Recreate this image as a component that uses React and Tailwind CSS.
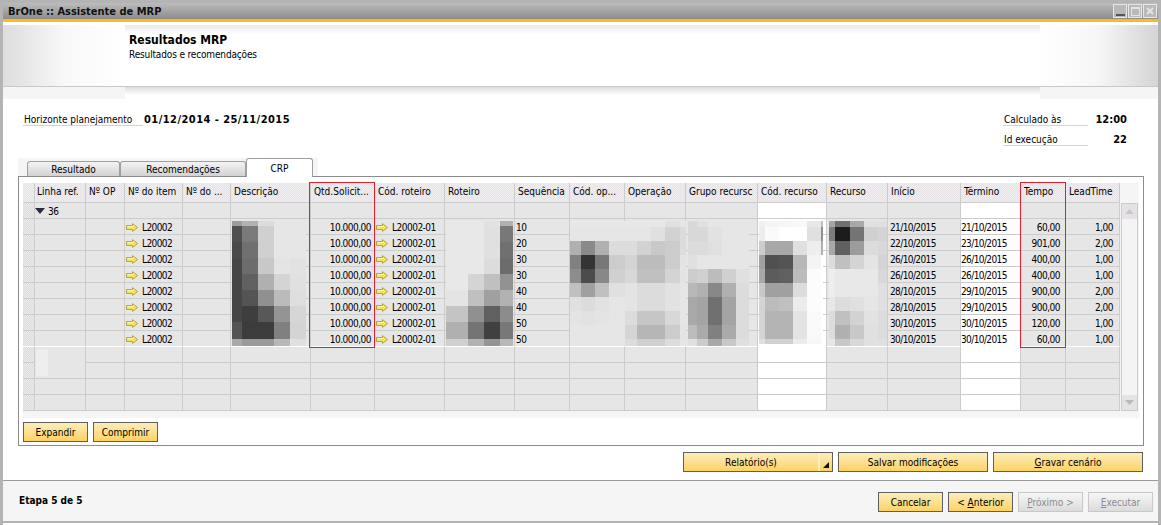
import React from "react";

const COLS = [12, 51, 39, 58, 48, 80, 64, 70, 70, 55, 55, 61, 72, 69, 61, 73, 60, 45, 54];
const GRID_COLS = "grid grid-cols-[12px_51px_39px_58px_48px_80px_64px_70px_70px_55px_55px_61px_72px_69px_61px_73px_60px_45px_54px]";
const HEADERS = [
  "", "Linha ref.", "Nº OP", "Nº do item", "Nº do ...", "Descrição", "Qtd.Solicit...", "Cód. roteiro",
  "Roteiro", "Sequência", "Cód. op...", "Operação", "Grupo recursc", "Cód. recurso", "Recurso",
  "Início", "Término", "Tempo", "LeadTime",
];
const ROWS = [
  ["10", "21/10/2015", "21/10/2015", "60,00", "1,00"],
  ["20", "22/10/2015", "23/10/2015", "901,00", "2,00"],
  ["30", "26/10/2015", "26/10/2015", "400,00", "1,00"],
  ["30", "26/10/2015", "26/10/2015", "400,00", "1,00"],
  ["40", "28/10/2015", "29/10/2015", "900,00", "2,00"],
  ["40", "28/10/2015", "29/10/2015", "900,00", "2,00"],
  ["50", "30/10/2015", "30/10/2015", "120,00", "1,00"],
  ["50", "30/10/2015", "30/10/2015", "60,00", "1,00"],
];
const WHITE_COLS = [13, 16];

const Y_FULL = [221, 226, 242, 258, 274, 290, 306, 322, 339, 346];
const Y_14 = [221, 227, 241, 255, 269, 283, 297, 311, 325, 339, 346];

// blurred blocks in the picture, page coordinates, one gray per block
const MOSAICS = [
  {
    xs: [232, 242, 258, 274, 290, 306],
    ys: Y_FULL,
    grays: [
      [0x9e, 0xb2, 0xdc, 0xe6, 0xe6],
      [0x50, 0x7a, 0xd0, 0xe6, 0xe6],
      [0x4a, 0x70, 0xd0, 0xe6, 0xe6],
      [0x46, 0x6c, 0xc8, 0xe4, 0xe2],
      [0x46, 0x60, 0xb0, 0xd4, 0xe0],
      [0x46, 0x54, 0x90, 0xbb, 0xde],
      [0x46, 0x3e, 0x58, 0x94, 0xd6],
      [0x54, 0x3c, 0x3c, 0x80, 0xd4],
      [0xa8, 0x9a, 0x9a, 0xb8, 0xe0],
    ],
  },
  {
    xs: [446, 468, 484, 500, 513],
    ys: Y_FULL,
    grays: [
      [0xe8, 0xe8, 0xe2, 0xb0],
      [0xe8, 0xe8, 0xe0, 0x78],
      [0xe8, 0xe8, 0xe0, 0x70],
      [0xe8, 0xe8, 0xdc, 0x6c],
      [0xe8, 0xd4, 0xc0, 0x92],
      [0xe4, 0xc0, 0xa0, 0xb2],
      [0xc4, 0x90, 0x60, 0x8c],
      [0xb0, 0x74, 0x40, 0x78],
      [0xd0, 0xb2, 0x94, 0xb8],
    ],
  },
  {
    xs: [570, 581, 595, 609, 625],
    ys: Y_14,
    grays: [
      [0xe8, 0xe8, 0xe8, 0xe8],
      [0xe6, 0xe6, 0xe6, 0xe6],
      [0xb0, 0x8a, 0xb0, 0xdc],
      [0x80, 0x34, 0x78, 0xcc],
      [0x8c, 0x4c, 0x88, 0xd0],
      [0xc0, 0xa0, 0xc0, 0xe0],
      [0xe0, 0xdc, 0xe2, 0xe6],
      [0xe4, 0xe2, 0xe4, 0xe6],
      [0xe6, 0xe6, 0xe6, 0xe6],
      [0xe6, 0xe6, 0xe6, 0xe6],
    ],
  },
  {
    xs: [625, 637, 651, 665, 680, 686],
    ys: Y_14,
    grays: [
      [0xe8, 0xe8, 0xe8, 0xe0, 0xe6],
      [0xe6, 0xe6, 0xe0, 0xd2, 0xdc],
      [0xdc, 0xd2, 0xc8, 0xcc, 0xdc],
      [0xd4, 0xbc, 0xbc, 0xcc, 0xe4],
      [0xd8, 0xc0, 0xc0, 0xd4, 0xe4],
      [0xe4, 0xdc, 0xdc, 0xe2, 0xe6],
      [0xe4, 0xdc, 0xdc, 0xe2, 0xe6],
      [0xdc, 0xc6, 0xc6, 0xd8, 0xe6],
      [0xd4, 0xb6, 0xb6, 0xcc, 0xe4],
      [0xdc, 0xd0, 0xd0, 0xdc, 0xe6],
    ],
  },
  {
    xs: [688, 697, 708, 722, 736, 749],
    ys: Y_14,
    grays: [
      [0xd8, 0xe0, 0xe6, 0xe6, 0xe6],
      [0xd8, 0xd8, 0xe2, 0xe6, 0xe6],
      [0xdc, 0xdc, 0xe0, 0xe6, 0xe6],
      [0xe0, 0xe6, 0xe6, 0xe6, 0xe6],
      [0xcc, 0xd0, 0xbc, 0xd0, 0xe0],
      [0xb8, 0xb0, 0x88, 0xb0, 0xdc],
      [0xa8, 0xa4, 0x70, 0xa4, 0xdc],
      [0xa8, 0xa4, 0x70, 0xa4, 0xdc],
      [0xbc, 0xaa, 0x80, 0xaa, 0xdc],
      [0xe0, 0xcc, 0xa8, 0xc8, 0xe0],
    ],
  },
  {
    xs: [759, 765, 779, 793, 807, 821, 823],
    ys: [221, 227, 241, 255, 269, 283, 297, 311, 325, 339, 344],
    grays: [
      [0xf0, 0xf4, 0xf6, 0xf8, 0xe8, 0xc0],
      [0xec, 0xfa, 0xff, 0xff, 0xe0, 0x90],
      [0xcc, 0xa8, 0xa8, 0xe0, 0xee, 0xb0],
      [0xa0, 0x50, 0x54, 0xb8, 0xf4, 0xff],
      [0xa8, 0x5c, 0x60, 0xbc, 0xfc, 0xff],
      [0xc8, 0xa0, 0xa0, 0xdc, 0xfc, 0xff],
      [0xd4, 0xbc, 0xc0, 0xec, 0xfc, 0xff],
      [0xd4, 0xb4, 0xb4, 0xe4, 0xfa, 0xff],
      [0xd4, 0xb4, 0xb4, 0xe4, 0xfa, 0xff],
      [0xe0, 0xd0, 0xd0, 0xec, 0xf8, 0xff],
    ],
  },
  {
    xs: [829, 835, 850, 864, 878, 887],
    ys: Y_14,
    grays: [
      [0xa4, 0x70, 0xa8, 0xe0, 0xe0],
      [0x7c, 0x1c, 0x74, 0xd0, 0xd4],
      [0xa8, 0x60, 0x9c, 0xdc, 0xd8],
      [0xdc, 0xc0, 0xd4, 0xe4, 0xd4],
      [0xee, 0xe8, 0xe8, 0xe8, 0xd8],
      [0xee, 0xe8, 0xe8, 0xe8, 0xe0],
      [0xe8, 0xdc, 0xe0, 0xe6, 0xe0],
      [0xdc, 0xc0, 0xd2, 0xe2, 0xdc],
      [0xdc, 0xb0, 0xc8, 0xe0, 0xdc],
      [0xe6, 0xc8, 0xd8, 0xe0, 0xe0],
    ],
  },
];

function Arrow() {
  return (
    <svg width="12" height="9" viewBox="0 0 12 9" className="shrink-0">
      <path d="M0.5 2.5H6.5V0.6L11.5 4.5L6.5 8.4V6.5H0.5Z" fill="#f7e35a" stroke="#b8a23a" />
      <path d="M1.5 3.5H7.5V2.4" fill="none" stroke="#fdf7b8" />
    </svg>
  );
}

function BlurOverlay() {
  const rects = [];
  MOSAICS.forEach((m, mi) => {
    m.grays.forEach((row, r) => {
      row.forEach((g, c) => {
        const hex = g.toString(16).padStart(2, "0");
        rects.push(
          <rect
            key={`${mi}-${r}-${c}`}
            x={m.xs[c]}
            y={m.ys[r]}
            width={m.xs[c + 1] - m.xs[c]}
            height={m.ys[r + 1] - m.ys[r]}
            fill={`#${hex}${hex}${hex}`}
          />,
        );
      });
    });
  });
  return (
    <svg
      width="1116"
      height="228"
      viewBox="23 183 1116 228"
      shapeRendering="crispEdges"
      className="absolute left-0 top-0 pointer-events-none"
    >
      {rects}
      <rect x="35" y="348" width="50" height="30" fill="#e6e6e6" />
      <rect x="36" y="349" width="12" height="27" fill="#eeeeee" />
    </svg>
  );
}

function Cell({ index, children, last, className = "" }) {
  const white = WHITE_COLS.includes(index);
  const dither = index === 0;
  return (
    <div
      className={`h-full overflow-hidden whitespace-nowrap border-r border-b flex items-center pt-[1px] ${
        last ? "border-b-white" : "border-b-[#cccccc]"
      } border-r-[#cccccc] ${
        dither
          ? "bg-[repeating-conic-gradient(#dcd8dc_0_25%,#eeecee_0_50%)] bg-[length:2px_2px]"
          : white
            ? "bg-white"
            : "bg-[#e6e6e6]"
      } ${className}`}
    >
      {children}
    </div>
  );
}

function DataRow({ row, last }) {
  const [seq, start, end, tempo, lead] = row;
  return (
    <div className={`${GRID_COLS} h-4`}>
      {COLS.map((_, i) => {
        let content = null;
        let cls = "";
        if (i === 3) {
          content = (
            <>
              <Arrow />
              <span className="ml-1 tracking-[-0.6px]">L20002</span>
            </>
          );
          cls = "pl-[1px]";
        }
        if (i === 6) {
          content = "10.000,00";
          cls = "justify-end pr-[3px] tracking-[-0.5px]";
        }
        if (i === 7) {
          content = (
            <>
              <Arrow />
              <span className="ml-1 tracking-[-0.5px]">L20002-01</span>
            </>
          );
          cls = "pl-[1px]";
        }
        if (i === 9) {
          content = seq;
          cls = "pl-[1px] tracking-[-0.5px]";
        }
        if (i === 15) {
          content = start;
          cls = "pl-[2px] tracking-[-0.6px]";
        }
        if (i === 16) {
          content = end;
          cls = "tracking-[-0.6px]";
        }
        if (i === 17) {
          content = tempo;
          cls = "justify-end pr-[5px] tracking-[-0.5px]";
        }
        if (i === 18) {
          content = lead;
          cls = "justify-end pr-[6px] tracking-[-0.5px]";
        }
        return (
          <Cell key={i} index={i} last={last} className={cls}>
            {content}
          </Cell>
        );
      })}
    </div>
  );
}

function EmptyRow() {
  return (
    <div className={`${GRID_COLS} h-4`}>
      {COLS.map((_, i) => (
        <Cell key={i} index={i} />
      ))}
    </div>
  );
}

function GroupRow() {
  return (
    <div className={`${GRID_COLS} h-4`}>
      {COLS.map((_, i) => (
        <Cell key={i} index={i}>
          {i === 1 ? (
            <>
              <svg width="10" height="6" viewBox="0 0 10 6">
                <path d="M0 0H10L5 6Z" fill="#2b2b3d" />
              </svg>
              <span className="ml-[3px] tracking-[-0.5px]">36</span>
            </>
          ) : null}
        </Cell>
      ))}
    </div>
  );
}

function Scrollbar() {
  return (
    <div className="ml-[1px] mt-5 flex h-[208px] w-[17px] flex-col justify-between border border-[#cccccc] bg-[#f4f4f4]">
      <div className="flex h-[15px] items-center justify-center bg-[#e4e2e4]">
        <svg width="9" height="5" viewBox="0 0 9 5">
          <path d="M0 5H9L4.5 0Z" fill="#c8c8c8" />
        </svg>
      </div>
      <div className="flex h-[15px] items-center justify-center bg-[#e4e2e4]">
        <svg width="9" height="5" viewBox="0 0 9 5">
          <path d="M0 0H9L4.5 5Z" fill="#b8b8b8" />
        </svg>
      </div>
    </div>
  );
}

function Grid() {
  return (
    <div className="relative flex h-[235px] w-[1116px] items-start bg-[#f5f5f5]">
      <div className="w-[1097px]">
        <div className={`${GRID_COLS} h-5`}>
          {HEADERS.map((h, i) => (
            <div
              key={i}
              className={`h-full overflow-hidden whitespace-nowrap border-r border-b border-[#cccccc] bg-[repeating-conic-gradient(#e6e2e6_0_25%,#f0eef0_0_50%)] bg-[length:2px_2px] pt-[2px] ${
                i === 1 ? "pl-[2px]" : "pl-[3px]"
              }`}
            >
              {h}
            </div>
          ))}
        </div>
        <GroupRow />
        {ROWS.map((row, i) => (
          <DataRow key={i} row={row} last={i === ROWS.length - 1} />
        ))}
        <EmptyRow />
        <EmptyRow />
        <EmptyRow />
        <EmptyRow />
      </div>
      <Scrollbar />
      <BlurOverlay />
      <div className="absolute left-[286px] top-[-1px] h-[166px] w-[66px] border border-[#e0202c]" />
      <div className="absolute left-[997px] top-[-1px] h-[166px] w-[46px] border border-[#e0202c]" />
    </div>
  );
}

function YellowButton({ children, className = "w-[65px]" }) {
  return (
    <button className={`flex h-5 items-center justify-center border border-[#5f5f5f] bg-gradient-to-b from-[#fbeeb8] to-[#fdd262] text-black ${className}`}>
      {children}
    </button>
  );
}

function DisabledButton({ children }) {
  return (
    <button className="flex h-5 w-[65px] items-center justify-center border border-[#c8c8c8] bg-gradient-to-b from-[#f6f6f6] to-[#dcdcdc] text-[#8c8c8c]">
      {children}
    </button>
  );
}

function Tab({ children, className }) {
  return (
    <div className={`flex items-center justify-center rounded-t-[3px] border border-b-0 border-[#a0a0a0] ${className}`}>
      {children}
    </div>
  );
}

function WinButton({ children }) {
  return (
    <div className="flex h-[14px] w-[14px] items-center justify-center border border-[#e8e8e8] bg-[#b9b9b9]">
      {children}
    </div>
  );
}

export default function App() {
  return (
    <div className="flex h-[525px] w-[1161px] flex-col overflow-hidden border-x-[3px] border-t-[3px] border-[#b4b4b4] bg-white font-['DejaVu_Sans_Condensed','DejaVu_Sans',sans-serif] text-[10px] leading-[13px] text-black">
      {/* title bar */}
      <div className="flex h-4 shrink-0 items-center justify-between bg-gradient-to-b from-[#bcbcbc] to-[#8c8c8c] pl-[5px] pr-[1px]">
        <span className="text-[11px] font-bold text-[#111111]">BrOne :: Assistente de MRP</span>
        <div className="flex gap-[1px]">
          <WinButton>
            <div className="mt-[8px] h-[2px] w-[9px] bg-[#555555]" />
          </WinButton>
          <WinButton>
            <div className="h-[9px] w-[9px] border border-t-2 border-[#e4e4e4]" />
          </WinButton>
          <WinButton>
            <svg width="8" height="8" viewBox="0 0 8 8">
              <path d="M1 1L7 7M7 1L1 7" stroke="#e4e4e4" strokeWidth="2" />
            </svg>
          </WinButton>
        </div>
      </div>
      <div className="h-[3px] shrink-0 bg-[#fdbb16]" />
      <div className="h-[3px] shrink-0 bg-white" />

      {/* wizard header */}
      <div className="flex h-[61px] shrink-0">
        <div className="w-[122px] bg-gradient-to-r from-[#dddddd] via-[#f8f8f8] to-white" />
        <div className="flex-1 bg-[linear-gradient(to_bottom,#e8e8e8,#ffffff_9px)] pl-1 pt-[7px]">
          <div className="text-[12px] font-bold leading-[16px]">Resultados MRP</div>
          <div className="tracking-[-0.15px]">Resultados e recomendações</div>
        </div>
        <div className="w-[118px] bg-gradient-to-r from-white via-[#f6f6f6] to-[#d4d4d4]" />
      </div>
      <div className="h-[1px] shrink-0 bg-[#c8c8c8]" />
      <div className="flex h-3 shrink-0">
        <div className="w-[122px] bg-[#f5f5f5]" />
        <div className="flex-1 bg-[linear-gradient(to_bottom,#dedede,#ffffff_8px)]" />
        <div className="w-[118px] bg-[#f5f5f5]" />
      </div>

      {/* info */}
      <div className="flex h-[59px] shrink-0 justify-between pl-5 pr-[31px] pt-[7px]">
        <div className="flex h-5 items-start">
          <div className="h-5 w-[120px] border-b border-[#d4d4d4] pl-[1px] pt-[7px]">Horizonte planejamento</div>
          <div className="ml-[1px] pt-[7px] text-[11px] font-bold tracking-[0.45px]">01/12/2014 - 25/11/2015</div>
        </div>
        <div className="flex w-[124px] flex-col">
          <div className="flex h-5">
            <div className="w-[85px] border-b border-[#d4d4d4] pl-[1px] pt-[7px]">Calculado às</div>
            <div className="flex-1 pt-[7px] text-right text-[11px] font-bold">12:00</div>
          </div>
          <div className="flex h-5">
            <div className="w-[85px] border-b border-[#d4d4d4] pl-[1px] pt-[7px]">Id execução</div>
            <div className="flex-1 pt-[7px] text-right text-[11px] font-bold">22</div>
          </div>
        </div>
      </div>

      {/* tabs */}
      <div className="ml-[15px] flex h-[18px] w-[300px] shrink-0 items-end bg-[#f5f5f5] pl-[9px]">
        <Tab className="h-[15px] w-[93px] bg-gradient-to-b from-[#f4f4f4] to-[#d2d2d2]">Resultado</Tab>
        <Tab className="h-[15px] w-[126px] bg-gradient-to-b from-[#f4f4f4] to-[#d2d2d2]">Recomendações</Tab>
        <Tab className="relative top-[1px] h-[19px] w-[67px] bg-white">CRP</Tab>
      </div>

      {/* panel */}
      <div className="ml-[15px] flex h-[270px] w-[1126px] shrink-0 flex-col border border-[#8c8c8c] px-1 pt-[6px]">
        <Grid />
        <div className="mt-1 flex gap-[5px]">
          <YellowButton>Expandir</YellowButton>
          <YellowButton>Comprimir</YellowButton>
        </div>
      </div>

      {/* actions */}
      <div className="flex h-[34px] shrink-0 justify-end gap-[5px] pr-[15px] pt-[6px]">
        <YellowButton className="relative w-[150px] pr-[14px]">
          Relatório(s)
          <span className="absolute right-[12px] top-0 h-full w-[2px] bg-[#fff0c0]" />
          <svg width="6" height="6" viewBox="0 0 6 6" className="absolute bottom-[3px] right-[3px]">
            <path d="M6 0V6H0Z" fill="#111111" />
          </svg>
        </YellowButton>
        <YellowButton className="w-[150px]">Salvar modificações</YellowButton>
        <YellowButton className="w-[150px]">
          <span>
            <u>G</u>ravar cenário
          </span>
        </YellowButton>
      </div>

      {/* footer */}
      <div className="flex h-[43px] shrink-0 items-start justify-between border-t border-b-2 border-t-[#999999] border-b-[#b4b4b4] bg-[#f5f5f5] pl-4 pr-[5px] pt-[11px]">
        <div className="pt-[2px] font-bold">Etapa 5 de 5</div>
        <div className="flex gap-[5px]">
          <YellowButton>Cancelar</YellowButton>
          <YellowButton>
            <span>
              &lt; <u>A</u>nterior
            </span>
          </YellowButton>
          <DisabledButton>
            <span>
              <u>P</u>róximo &gt;
            </span>
          </DisabledButton>
          <DisabledButton>
            <span>
              <u>E</u>xecutar
            </span>
          </DisabledButton>
        </div>
      </div>
    </div>
  );
}
